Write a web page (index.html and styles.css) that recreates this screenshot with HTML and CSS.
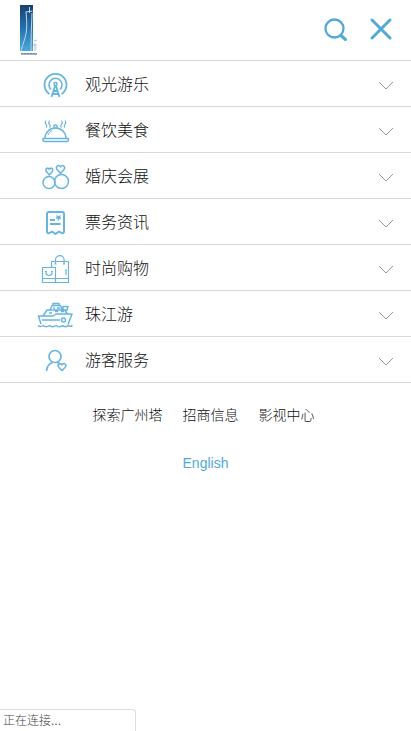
FILE: index.html
```html
<!DOCTYPE html>
<html lang="zh-CN">
<head>
<meta charset="utf-8">
<meta name="viewport" content="width=device-width, initial-scale=1">
<title>广州塔</title>
<link rel="stylesheet" href="styles.css">
</head>
<body>
<header class="header">
  <a class="logo" href="#" aria-label="广州塔">
    <svg width="20" height="52" viewBox="0 0 20 52" aria-hidden="true">
      <defs><linearGradient id="sky" x1="0" y1="0" x2="0" y2="1"><stop offset="0" stop-color="#17406f"/><stop offset=".5" stop-color="#2472ad"/><stop offset="1" stop-color="#4aa8da"/></linearGradient></defs>
      <path fill="url(#sky)" d="M0 0h13v46H0z"/>
      <path fill="none" stroke="#b9d8ea" d="M9.500 2v6M5.500 7l7-1M6 7q2 17-1 26T1 46M12 8q-1 20-1 38"/>
      <path fill="none" stroke="#b3c1ca" stroke-width="1" d="M14 36l3-1M14 39h2v2h-2zM14 43h3M14 45h2"/>
      <path fill="none" stroke="#9db2c0" stroke-width="2" d="M1 49h16"/>
      <path fill="none" stroke="#6f8da1" stroke-width="1" stroke-dasharray="2 1" d="M1 48.500h16"/>
    </svg>
  </a>
  <div class="actions">
    <button type="button" aria-label="搜索">
      <svg width="26" height="26" viewBox="0 0 26 26" aria-hidden="true"><g fill="none" stroke="#52a9d8" stroke-width="2.300"><circle cx="12.500" cy="12.500" r="9"/><path stroke-width="3" stroke-linecap="round" d="M19.500 20l4 3.500"/></g></svg>
    </button>
    <button type="button" aria-label="关闭">
      <svg width="26" height="26" viewBox="0 0 26 26" aria-hidden="true"><path fill="none" stroke="#52a9d8" stroke-width="3" stroke-linecap="round" d="M4 4l18 18M22 4L4 22"/></svg>
    </button>
  </div>
</header>
<nav aria-label="主菜单">
  <ul class="menu">
    <li><a href="#">
      <svg class="icon" viewBox="0 0 40 40" aria-hidden="true"><path stroke-width="1.800" d="M14.500 31A11 11 0 1 1 26.500 31"/><path stroke-width="1.600" d="M16 26.500A6.500 6.500 0 1 1 25 26.500"/><circle cx="20.500" cy="21" r="1.600"/><path stroke-width="1.800" d="M20 23l-3.500 11M21 23l3.500 11M18.500 28h4M17.500 31h6"/></svg>
      <span>观光游乐</span><svg class="chevron" viewBox="0 0 16 10" aria-hidden="true"><path d="M2 1l7 7 7-7"/></svg></a></li>
    <li><a href="#">
      <svg class="icon" viewBox="0 0 40 40" aria-hidden="true"><path d="M10 29.500a10.500 10.500 0 0 1 21 0M8 29.500h25.500v1q0 2-2 2H10q-2 0-2-2z"/><circle cx="20.500" cy="17.500" r="1.600"/><path stroke-width="1" d="M13 26q1-3 4-4.500"/><path stroke-width="1.200" d="M11 11.500q-1.500 2 0 4t0 3M14.500 11.500q-1.500 2 0 4t0 3M26.500 11.500q1.500 2 0 4t0 3M30 11.500q1.500 2 0 4t0 3"/></svg>
      <span>餐饮美食</span><svg class="chevron" viewBox="0 0 16 10" aria-hidden="true"><path d="M2 1l7 7 7-7"/></svg></a></li>
    <li><a href="#">
      <svg class="icon" viewBox="0 0 40 40" aria-hidden="true"><circle cx="14" cy="27.500" r="6"/><circle cx="26.500" cy="26.500" r="7"/><path d="M14.300 20l-3-3.500c-1.500-3 1.500-4.500 3-2.200 1.500-2.300 4.500-.8 3 2.200zM25.500 18.500l-3.500-4c-2-3.200 2-5.500 3.500-2.600 1.500-2.900 5.500-.6 3.500 2.600z"/></svg>
      <span>婚庆会展</span><svg class="chevron" viewBox="0 0 16 10" aria-hidden="true"><path d="M2 1l7 7 7-7"/></svg></a></li>
    <li><a href="#">
      <svg class="icon" viewBox="0 0 40 40" aria-hidden="true"><path stroke-width="2" d="M12 31V13q0-2 2-2h13q2 0 2 2v18q-1 2-2.500 1L24 30.500 20.500 33 17 30.500 14.500 32q-1.500 1-2.500-1z"/><path stroke-width="1.800" d="M15 19h5M15 23h10.500"/><path stroke-width="1.400" d="M21.500 14.500l2 2 2-2M21 17h5M23.500 16.500v3"/></svg>
      <span>票务资讯</span><svg class="chevron" viewBox="0 0 16 10" aria-hidden="true"><path d="M2 1l7 7 7-7"/></svg></a></li>
    <li><a href="#">
      <svg class="icon" viewBox="0 0 40 40" aria-hidden="true"><g stroke-width="1.200"><path d="M16.500 20V14.500h17v21H21M7.500 20.500h13v15h-13zM7.500 31.500h26M20.500 17v-4a4.300 4.300 0 0 1 8.600 0v4M11 24.500v1q0 3 3 3t3-3v-1"/><path d="M19.500 17h2M28 17h2M10 24.500h2M16 24.500h2M31 22v6"/></g></svg>
      <span>时尚购物</span><svg class="chevron" viewBox="0 0 16 10" aria-hidden="true"><path d="M2 1l7 7 7-7"/></svg></a></li>
    <li><a href="#">
      <svg class="icon" viewBox="0 0 40 40" aria-hidden="true"><path d="M6 31L3.500 23h14.500l3-2h16l-4 10.500M8 23l4-6h17.500l3 4M15 17l2-4.500h8.500l1.500 4.500M18 12.500v-2h6v2M14 20h3M20 18.500h3M26 18.500h3M18 15h2M22 15h3M28 17v-3.500h5l-1 3.500h-3M7 27h18"/><circle cx="28.500" cy="27" r="2"/><path d="M3 32.500q2 2 5 0 3 2.500 6.500 0 3 2.500 6.500 0 3 2.500 6.500 0 3 2.500 5.500 0 2 1.500 4.500 0"/></svg>
      <span>珠江游</span><svg class="chevron" viewBox="0 0 16 10" aria-hidden="true"><path d="M2 1l7 7 7-7"/></svg></a></li>
    <li><a href="#">
      <svg class="icon" viewBox="0 0 40 40" aria-hidden="true"><circle stroke-width="1.700" cx="20" cy="17.500" r="6"/><path stroke-width="1.700" d="M11.500 32q.5-6.500 6-8.500M22 23.500q2 .3 3 1.500"/><path d="M27 31.500l-3.300-3.300c-1.800-3 1.800-5 3.300-2.200 1.500-2.800 5.100-.8 3.300 2.200z"/></svg>
      <span>游客服务</span><svg class="chevron" viewBox="0 0 16 10" aria-hidden="true"><path d="M2 1l7 7 7-7"/></svg></a></li>
  </ul>
</nav>
<nav class="links" aria-label="其他链接">
  <a href="#">探索广州塔</a><a href="#">招商信息</a><a href="#">影视中心</a>
</nav>
<a class="language" href="#" lang="en">English</a>
<div class="status" role="status">正在连接...</div>
</body>
</html>
```
FILE: styles.css
```css
* { box-sizing: border-box; }
body {
  margin: 0;
  min-height: 100vh;
  display: flex;
  flex-direction: column;
  background: #fff;
  color: #111;
  font-family: "Liberation Sans", "Noto Sans CJK SC", sans-serif;
  font-weight: 300;
}
a { color: inherit; text-decoration: none; }
svg { display: block; }
.header {
  display: flex;
  justify-content: space-between;
  align-items: flex-start;
  min-height: 61px;
  padding: 5px 17px 0 20px;
  border-bottom: 1px solid #d8d8d8;
}
.actions { display: flex; gap: 20px; padding-top: 11px; }
.actions button { padding: 0; border: 0; background: none; cursor: pointer; }
.menu { margin: 0; padding: 0; list-style: none; }
.menu a {
  display: flex;
  align-items: center;
  gap: 10px;
  height: 46px;
  padding: 0 18px 2px 35px;
  border-bottom: 1px solid #d8d8d8;
  font-size: 16px;
}
.menu span { flex: 1; }
.icon {
  width: 40px;
  height: 40px;
  fill: none;
  stroke: #67b5df;
  stroke-width: 1.5;
  stroke-linejoin: round;
}
.chevron {
  width: 16px;
  height: 10px;
  margin-top: 6px;
  fill: none;
  stroke: #999;
}
.links {
  display: flex;
  justify-content: center;
  gap: 20px;
  margin-top: 22px;
  padding-right: 4px;
  font-size: 14px;
  line-height: 20px;
}
.language {
  align-self: center;
  margin-top: 28px;
  color: #52a9d8;
  font-size: 14px;
  line-height: 20px;
}
.status {
  align-self: flex-start;
  min-width: 136px;
  margin-top: auto;
  padding: 1px 3px 0;
  border: 1px solid #ddd;
  border-width: 1px 1px 0 0;
  border-top-right-radius: 4px;
  color: #444;
  font-size: 12px;
  line-height: 20px;
}
```
